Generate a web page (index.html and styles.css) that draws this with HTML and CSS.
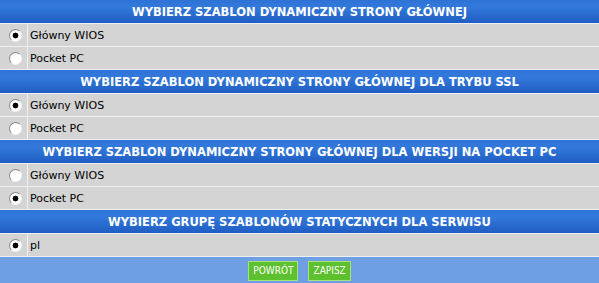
FILE: index.html
```html
<!DOCTYPE html>
<html lang="pl">
<head>
<meta charset="utf-8">
<title>Szablony</title>
<link rel="stylesheet" href="styles.css">
</head>
<body>
<form class="panel">
  <div class="head">WYBIERZ SZABLON DYNAMICZNY STRONY GŁÓWNEJ</div>
  <label class="row"><span class="cell-radio"><input type="radio" name="t1" checked></span><span class="cell-label">Główny WIOS</span></label>
  <label class="row"><span class="cell-radio"><input type="radio" name="t1"></span><span class="cell-label">Pocket PC</span></label>

  <div class="head">WYBIERZ SZABLON DYNAMICZNY STRONY GŁÓWNEJ DLA TRYBU SSL</div>
  <label class="row"><span class="cell-radio"><input type="radio" name="t2" checked></span><span class="cell-label">Główny WIOS</span></label>
  <label class="row"><span class="cell-radio"><input type="radio" name="t2"></span><span class="cell-label">Pocket PC</span></label>

  <div class="head">WYBIERZ SZABLON DYNAMICZNY STRONY GŁÓWNEJ DLA WERSJI NA POCKET PC</div>
  <label class="row"><span class="cell-radio"><input type="radio" name="t3"></span><span class="cell-label">Główny WIOS</span></label>
  <label class="row"><span class="cell-radio"><input type="radio" name="t3" checked></span><span class="cell-label">Pocket PC</span></label>

  <div class="head">WYBIERZ GRUPĘ SZABLONÓW STATYCZNYCH DLA SERWISU</div>
  <label class="row"><span class="cell-radio"><input type="radio" name="t4" checked></span><span class="cell-label">pl</span></label>

  <div class="foot">
    <button type="button" class="btn">POWRÓT</button>
    <button type="submit" class="btn">ZAPISZ</button>
  </div>
</form>
</body>
</html>
```
FILE: styles.css
```css
html, body {
  margin: 0;
  padding: 0;
  background: #ffffff;
}
.panel {
  width: 599px;
  height: 283px;
  display: flex;
  flex-direction: column;
  gap: 1px;
  background: #eef0f2;
  margin: 0;
  font-family: "DejaVu Sans", sans-serif;
}
.head {
  height: 23px;
  line-height: 24px;
  text-align: center;
  color: #ffffff;
  font-weight: bold;
  font-size: 11.5px;
  background: linear-gradient(#2f72d6 0%, #3379dc 30%, #1f5dc2 100%);
}
.row {
  height: 22px;
  display: flex;
  gap: 1px;
}
.cell-radio {
  width: 27px;
  background: #d4d4d4;
  display: flex;
  align-items: center;
  justify-content: center;
}
.cell-label {
  flex: 1;
  background: #d4d4d4;
  display: flex;
  align-items: center;
  padding-left: 2px;
  font-size: 11px;
  color: #000000;
}
.cell-radio input {
  appearance: none;
  -webkit-appearance: none;
  margin: 0 0 0 3px;
  width: 13px;
  height: 13px;
  border-radius: 50%;
  border: 1px solid;
  border-color: #8c8c8c #f4f4f4 #f4f4f4 #8c8c8c;
  background: radial-gradient(circle at 55% 55%, #ffffff 55%, #e6e6e6 100%);
  box-sizing: border-box;
}
.cell-radio input:checked {
  background: radial-gradient(circle at 50% 50%, #000000 0 2.6px, #ffffff 3.2px, #ffffff 60%, #e6e6e6 100%);
}
.foot {
  flex: 1;
  background: #6e9fe2;
  display: flex;
  justify-content: center;
  align-items: center;
  gap: 10px;
  padding-top: 2px;
}
.btn {
  height: 20px;
  padding: 0 4px;
  border: 1px solid #a8e07c;
  background: #5dc02e;
  color: #ffffff;
  font-family: "DejaVu Sans Condensed", "DejaVu Sans", sans-serif;
  font-size: 10px;
  line-height: 18px;
  cursor: pointer;
}
```
